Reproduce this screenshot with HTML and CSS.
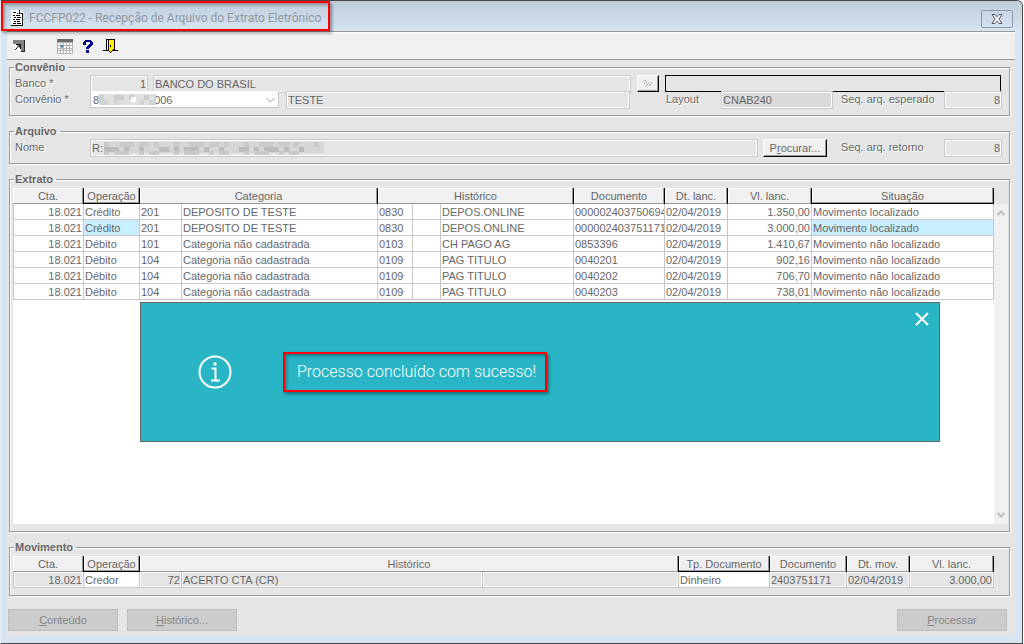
FILE: index.html
```
<!DOCTYPE html>
<html lang="pt-BR">
<head>
  <meta charset="UTF-8">
  <meta name="viewport" content="width=device-width, initial-scale=1.0">
  <title>FCCFP022 - Recepção de Arquivo do Extrato Eletrônico</title>
  <link rel="stylesheet" href="styles.css">
</head>
<body>
  <div class="window">
    <header class="titlebar">
      <div class="title highlight">
        <svg width="12" height="16" viewBox="0 0 12 16" shape-rendering="crispEdges">
          <path d="M0 0h9l3 3v13H0z" fill="#fff"/>
          <path d="M11 3h1v13h-1zM0 15h12v1H0zM8 0h1v3h3v1H8z" fill="#111"/>
          <path d="M2 2h3v1H2zM6 3h1v1H6zM2 5h2v1H2zM5 5h4v1H5zM3 7h2v1H3zM6 7h4v1H6zM2 9h2v1H2zM5 9h4v1H5zM3 11h2v1H3zM6 11h3v1H6zM2 13h3v1H2zM6 13h4v1H6z" fill="#000"/>
        </svg>
        <h1>FCCFP022 - Recepção de Arquivo do Extrato Eletrônico</h1>
      </div>
      <button class="win-close" type="button" aria-label="Fechar">
        <svg width="12" height="10" viewBox="0 0 12 10">
          <path d="M1 .5h3l2 2.300L8 .5h3L8 5l3 4.500H8L6 7.200 4 9.500H1L4 5z" fill="#f4f6fa" stroke="#51566a"/>
        </svg>
      </button>
    </header>

    <div class="client">
      <nav class="toolbar">
        <button type="button" aria-label="Abrir">
          <svg width="12" height="12" viewBox="0 0 12 12" shape-rendering="crispEdges">
            <path d="M0 0h12v12H0z" fill="#808080"/>
            <path d="M11 0h1v12h-1zM8 11h4v1H8z" fill="#222"/>
            <path d="M0 4h2l6 6v2H0z" fill="#fff"/>
            <path d="M3 4h5v5H7V6H6v1H5v1H4v1H3v1H2V9h1V8h1V7h1V6h1V5H3z" fill="#111"/>
          </svg>
        </button>
        <button type="button" class="calendar" aria-label="Calendário">
          <svg width="16" height="15" viewBox="0 0 16 15" shape-rendering="crispEdges">
            <path d="M0 0h16v15H0z" fill="#b4b4b4"/>
            <path d="M0 0h16v3H0z" fill="#6a6a6a"/>
            <path d="M1 4h2v2H1zM4 4h2v2H4zM7 4h2v2H7zM10 4h2v2h-2zM13 4h2v2h-2zM1 7h2v2H1zM7 7h2v2H7zM10 7h2v2h-2zM13 7h2v2h-2zM1 10h2v1H1zM4 10h2v1H4zM7 10h2v1H7zM10 10h2v1h-2zM13 10h2v1h-2zM1 12h2v2H1zM4 12h2v2H4zM7 12h2v2H7zM10 12h2v2h-2zM13 12h2v2h-2z" fill="#fff"/>
            <path d="M4 6h2v2H4z" fill="#1979b5"/>
          </svg>
        </button>
        <button type="button" aria-label="Ajuda">
          <svg width="10" height="13" viewBox="0 0 10 13" shape-rendering="crispEdges">
            <path d="M2 0h6v1h1v1h1v3H9v1H8v1H7v1H6v1H3V7h1V6h1V5h1V4h1V2H3v3H0V2h1V1h1zM3 10h3v3H3z" fill="#00008b"/>
          </svg>
        </button>
        <button type="button" aria-label="Sair">
          <svg width="15" height="14" viewBox="0 0 15 14" shape-rendering="crispEdges">
            <path d="M3 0h9v11h3v1H0v-1h3z" fill="#000"/>
            <path d="M4 1h7v10H4z" fill="#fff"/>
            <path d="M5 1h6v10h-1v1H9v1H8v1H7v-1H6v-1H5z" fill="#000"/>
            <path d="M6 1h5v9h-1v1H9v1H8v1H7v-1H6z" fill="#ffee00"/>
            <path d="M4 2h1v9H4z" fill="#fff"/>
            <path d="M7 6h1v2H7z" fill="#000"/>
          </svg>
        </button>
      </nav>

      <main class="content">
        <fieldset class="group">
          <legend>Convênio</legend>
          <div class="row">
            <label class="caption" for="banco">Banco *</label>
            <input class="field num code" id="banco" value="1" readonly>
            <input class="field grow bank-name" value="BANCO DO BRASIL" aria-label="Nome do banco" readonly>
            <button class="btn btn-lookup" type="button" aria-label="Consultar">
              <svg width="10" height="8" viewBox="0 0 10 8" shape-rendering="crispEdges">
                <path d="M0 1h1v1H0zM2 0h1v1H2zM3 2h1v1H3zM1 3h1v1H1zM4 4h1v1H4zM5 3h1v1H5zM3 5h1v1H3zM8 2h1v1H8zM7 4h1v1H7zM6 5h1v1H6z" fill="#999"/>
              </svg>
            </button>
            <output class="status"></output>
          </div>
          <div class="row">
            <label class="caption" for="convenio">Convênio *</label>
            <div class="select-wrap">
              <select id="convenio">
                <option>8&nbsp;&nbsp;&nbsp;&nbsp;&nbsp;&nbsp;&nbsp;&nbsp;&nbsp;&nbsp;&nbsp;&nbsp;&nbsp;&nbsp;&nbsp;&nbsp;&nbsp;&nbsp;006</option>
              </select>
              <svg class="mask mask-agreement" width="57" height="11" viewBox="0 0 57 11" shape-rendering="crispEdges">
                <path d="M0 0h57v11H0z" fill="#e0e0e0"/>
                <path d="M0 3h57" stroke="#cdcdcd" stroke-width="5" stroke-dasharray="5 10 10 5 5 10 5 5"/>
                <path d="M0 8h57" stroke="#d4d4d4" stroke-width="5" stroke-dasharray="10 5 5 20 5 5 10 5"/>
                <path d="M32 3h5v5h-5z" fill="#fff"/>
              </svg>
              <svg class="chevron" width="9" height="6" viewBox="0 0 9 6"><path d="M.5 1l4 4 4-4" fill="none" stroke="#a0a0a0"/></svg>
            </div>
            <input class="field grow agreement-name" value="TESTE" aria-label="Nome do convênio" readonly>
            <label class="caption-layout" for="layout">Layout</label>
            <input class="field layout" id="layout" value="CNAB240" readonly>
            <label class="caption-seq" for="seqEsperado">Seq. arq. esperado</label>
            <input class="field num code" id="seqEsperado" value="8" readonly>
          </div>
        </fieldset>

        <fieldset class="group">
          <legend>Arquivo</legend>
          <div class="row">
            <label class="caption" for="nome">Nome</label>
            <div class="file-wrap">
              <input class="field" id="nome" value="R:" readonly>
              <svg class="mask mask-file" width="220" height="15" viewBox="0 0 220 15" shape-rendering="crispEdges">
                <path d="M0 2h220v11H0z" fill="#d6d6d6"/>
                <path d="M0 4h220" stroke="#cacaca" stroke-width="5" stroke-dasharray="5 10 15 5 10 5 5 15"/>
                <path d="M0 9h215" stroke="#bcbcbc" stroke-width="5" stroke-dasharray="15 5 5 10 5 15 10 5 5 5"/>
                <path d="M0 13h210" stroke="#cacaca" stroke-width="4" stroke-dasharray="5 5 15 10 5 5 10 15"/>
              </svg>
            </div>
            <button class="btn btn-browse" type="button">P<u>r</u>ocurar...</button>
            <label class="caption-seq" for="seqRetorno">Seq. arq. retorno</label>
            <input class="field num code" id="seqRetorno" value="8" readonly>
          </div>
        </fieldset>

        <fieldset class="group statement">
          <legend>Extrato</legend>
          <div class="grid-area">
            <table class="grid">
              <colgroup>
                <col class="w-71"><col class="w-56"><col class="w-42"><col>
                <col class="w-35"><col class="w-28"><col class="w-133"><col class="w-91">
                <col class="w-63"><col class="w-84"><col class="w-182">
              </colgroup>
              <thead>
                <tr>
                  <th>Cta.</th>
                  <th class="key">Operação</th>
                  <th colspan="2">Categoria</th>
                  <th colspan="3">Histórico</th>
                  <th>Documento</th>
                  <th>Dt. lanc.</th>
                  <th>Vl. lanc.</th>
                  <th class="key">Situação</th>
                </tr>
              </thead>
              <tbody>
                <tr>
                  <td class="num">18.021</td><td>Crédito</td><td>201</td><td>DEPOSITO DE TESTE</td>
                  <td>0830</td><td></td><td>DEPOS.ONLINE</td><td>000002403750694</td>
                  <td>02/04/2019</td><td class="num">1.350,00</td><td>Movimento localizado</td>
                </tr>
                <tr>
                  <td class="num">18.021</td><td class="current">Crédito</td><td>201</td><td>DEPOSITO DE TESTE</td>
                  <td>0830</td><td></td><td>DEPOS.ONLINE</td><td>000002403751171</td>
                  <td>02/04/2019</td><td class="num">3.000,00</td><td class="current">Movimento localizado</td>
                </tr>
                <tr>
                  <td class="num">18.021</td><td>Débito</td><td>101</td><td>Categoria não cadastrada</td>
                  <td>0103</td><td></td><td>CH PAGO AG</td><td>0853396</td>
                  <td>02/04/2019</td><td class="num">1.410,67</td><td>Movimento não localizado</td>
                </tr>
                <tr>
                  <td class="num">18.021</td><td>Débito</td><td>104</td><td>Categoria não cadastrada</td>
                  <td>0109</td><td></td><td>PAG TITULO</td><td>0040201</td>
                  <td>02/04/2019</td><td class="num">902,16</td><td>Movimento não localizado</td>
                </tr>
                <tr>
                  <td class="num">18.021</td><td>Débito</td><td>104</td><td>Categoria não cadastrada</td>
                  <td>0109</td><td></td><td>PAG TITULO</td><td>0040202</td>
                  <td>02/04/2019</td><td class="num">706,70</td><td>Movimento não localizado</td>
                </tr>
                <tr>
                  <td class="num">18.021</td><td>Débito</td><td>104</td><td>Categoria não cadastrada</td>
                  <td>0109</td><td></td><td>PAG TITULO</td><td>0040203</td>
                  <td>02/04/2019</td><td class="num">738,01</td><td>Movimento não localizado</td>
                </tr>
              </tbody>
            </table>
            <div class="scrollbar">
              <svg width="8" height="6" viewBox="0 0 8 6"><path d="M.5 5L4 1.500 7.500 5" fill="none" stroke="#bdbdbd" stroke-width="2"/></svg>
              <svg width="8" height="6" viewBox="0 0 8 6"><path d="M.5 1L4 4.500 7.500 1" fill="none" stroke="#bdbdbd" stroke-width="2"/></svg>
            </div>
          </div>
        </fieldset>

        <fieldset class="group movement">
          <legend>Movimento</legend>
          <div class="movement-grid">
            <table class="grid grid-readonly">
              <colgroup>
                <col class="w-71"><col class="w-56"><col class="w-42"><col>
                <col class="w-196"><col class="w-91"><col class="w-77">
                <col class="w-63"><col class="w-84">
              </colgroup>
              <thead>
                <tr>
                  <th>Cta.</th>
                  <th class="key">Operação</th>
                  <th colspan="3">Histórico</th>
                  <th class="key">Tp. Documento</th>
                  <th>Documento</th>
                  <th>Dt. mov.</th>
                  <th>Vl. lanc.</th>
                </tr>
              </thead>
              <tbody>
                <tr>
                  <td class="num">18.021</td><td class="editable">Credor</td><td class="num">72</td><td>ACERTO CTA (CR)</td>
                  <td></td><td class="editable">Dinheiro</td><td>2403751171</td>
                  <td>02/04/2019</td><td class="num">3.000,00</td>
                </tr>
              </tbody>
            </table>
          </div>
        </fieldset>

        <footer class="actions">
          <button type="button" disabled><u>C</u>onteúdo</button>
          <button type="button" disabled><u>H</u>istórico...</button>
          <button type="button" class="process" disabled><u>P</u>rocessar</button>
        </footer>
      </main>
    </div>

    <div class="dialog" role="alertdialog" aria-labelledby="dialogText">
      <svg class="info" width="34" height="34" viewBox="0 0 34 34">
        <circle cx="17" cy="17" r="15.500" fill="none" stroke="#fff" stroke-width="2"/>
        <path d="M13.500 13.500H17.500V25M13 25.500h9" fill="none" stroke="#fff" stroke-width="2"/>
        <circle cx="17" cy="9" r="1.700" fill="#fff"/>
      </svg>
      <p class="message highlight" id="dialogText">Processo concluído com sucesso!</p>
      <button class="dialog-close" type="button" aria-label="Fechar mensagem">
        <svg width="14" height="14" viewBox="0 0 14 14"><path d="M1 1l12 12M13 1L1 13" stroke="#fff" stroke-width="2"/></svg>
      </button>
    </div>
  </div>
</body>
</html>
```
FILE: styles.css
```
* {
  box-sizing: border-box;
}
body {
  margin: 0;
  background: #fff;
  font: 11px/14px "Liberation Sans", Arial, sans-serif;
  color: #666;
}
button, input, select {
  font: inherit;
  color: inherit;
  margin: 0;
  padding: 0;
}
button {
  border: none;
  background: none;
}
svg {
  display: block;
}

/* window frame */
.window {
  position: relative;
  display: flex;
  flex-direction: column;
  min-height: 100vh;
  margin-right: 1px;
  background: #d7e4f2;
  border: 1px solid #4a4a4a;
  border-left-color: #e8eff7;
  border-top-right-radius: 6px;
}
.titlebar {
  display: flex;
  justify-content: space-between;
  align-items: flex-start;
  height: 30px;
  background: linear-gradient(#bfcddb, #d7e4f2);
  border-top-right-radius: 6px;
}
.highlight {
  border: 2px solid #f00;
  box-shadow: 2px 2px 3px rgba(0,0,0,0.4), inset 2px 2px 3px rgba(0,0,0,0.3);
}
.title {
  display: flex;
  align-items: center;
  gap: 6px;
  height: 30px;
  padding: 4px 7px 0 8px;
  z-index: 1;
}
h1 {
  margin: 0;
  font: 12px/16px Roboto, "Noto Sans", sans-serif;
  color: #8f989f;
  white-space: nowrap;
}
.win-close {
  display: flex;
  align-items: center;
  justify-content: center;
  width: 32px;
  height: 18px;
  margin: 9px 9px 0 0;
  border: 1px solid #8e9aa8;
  border-radius: 2px;
}
.client {
  flex: 1;
  display: flex;
  flex-direction: column;
  margin: 0 7px 7px 6px;
  background: #e5e5e5;
  border-top: 1px solid #999;
}
.toolbar {
  display: flex;
  align-items: center;
  gap: 10px;
  height: 28px;
  padding: 0 6px;
  background: #f0f0f0;
  border-top: 1px solid #fff;
  border-bottom: 1px solid #999;
}
.toolbar .calendar {
  margin-left: 22px;
}

/* groups */
.content {
  flex: 1;
  display: flex;
  flex-direction: column;
  gap: 8px;
  padding: 0 5px 5px 2px;
}
.group {
  min-width: 0;
  margin: 0;
  padding: 1px 7px 8px 5px;
  border: 1px solid #999;
  box-shadow: 1px 1px #fff, inset 1px 1px #fff;
}
legend {
  padding: 0 3px 0 1px;
  margin-left: -1px;
  font-weight: bold;
  line-height: 14px;
}
.row {
  display: flex;
  height: 16px;
}
.row label {
  line-height: 16px;
  text-shadow: 1px 1px #fff;
}
.caption {
  width: 75px;
}
.field {
  height: 18px;
  padding: 0 1px;
  background: #e5e5e5;
  border: 1px solid #c8c8c8;
  outline: 1px solid #fff;
  outline-offset: -2px;
  border-radius: 0;
}
.num {
  text-align: right;
}
.grow {
  flex: 1;
  min-width: 0;
}
.code {
  width: 58px;
}
.bank-name {
  margin: 0 6px 0 5px;
}
.btn {
  background: #f0f0f0;
  border: 1px solid #000;
  border-top-color: #fff;
  border-left-color: #fff;
  box-shadow: inset -1px -1px #999;
}
.btn-lookup {
  display: flex;
  align-items: center;
  justify-content: center;
  width: 22px;
  height: 17px;
}
.status {
  width: 336px;
  height: 17px;
  margin: 0 1px 0 6px;
  border: 1px solid #000;
}
.select-wrap {
  position: relative;
  width: 189px;
}
.select-wrap select {
  appearance: none;
  width: 100%;
  height: 17px;
  padding: 0 2px;
  background: #fff;
  border: 1px solid #c8c8c8;
  border-top-color: #fff;
  border-radius: 0;
}
.chevron {
  position: absolute;
  right: 4px;
  top: 6px;
}
.mask {
  position: absolute;
}
.mask-agreement {
  left: 9px;
  top: 3px;
}
.agreement-name {
  margin: 0 36px 0 7px;
}
.caption-layout {
  width: 55px;
}
.layout {
  width: 112px;
  margin-right: 8px;
  background: #d9d9d9;
}
.caption-seq {
  width: 103px;
}
.file-wrap {
  position: relative;
  flex: 1;
}
.file-wrap .field {
  width: 100%;
}
.mask-file {
  left: 14px;
  top: 1px;
}
.btn-browse {
  width: 64px;
  height: 18px;
  margin: 0 14px 0 5px;
}

/* data grids */
.statement {
  flex: 1;
  display: flex;
  flex-direction: column;
  padding: 1px 1px 7px 3px;
}
.statement legend {
  margin-left: 1px;
}
.grid-area {
  flex: 1;
  display: flex;
  min-height: 336px;
  margin-top: 1px;
  background: linear-gradient(#e5e5e5 16px, #fff 16px);
}
.grid {
  flex: 1;
  align-self: flex-start;
  width: 100%;
  table-layout: fixed;
  border-spacing: 0;
}
.grid th {
  height: 16px;
  padding: 0;
  line-height: 14px;
  font-weight: normal;
  background: #f0f0f0;
  border-right: 1px solid #000;
  box-shadow: inset -1px -1px #999, inset 1px 1px #fff;
}
.grid th.key {
  border-bottom: 1px solid #000;
}
.grid td {
  height: 16px;
  padding: 1px 1px 0;
  line-height: 14px;
  background: #fff;
  border-right: 1px solid #c8c8c8;
  border-bottom: 1px solid #c8c8c8;
  white-space: nowrap;
  overflow: hidden;
}
.grid td:first-child {
  border-left: 1px solid #c8c8c8;
}
.grid td.current {
  background: #c8efff;
}
.grid-readonly td {
  background: #e5e5e5;
  box-shadow: inset 0 0 0 1px #f8f8f8;
}
.grid-readonly td.editable {
  background: #fff;
}
.w-28 { width: 28px; }
.w-35 { width: 35px; }
.w-42 { width: 42px; }
.w-56 { width: 56px; }
.w-63 { width: 63px; }
.w-71 { width: 71px; }
.w-77 { width: 77px; }
.w-84 { width: 84px; }
.w-91 { width: 91px; }
.w-133 { width: 133px; }
.w-182 { width: 182px; }
.w-196 { width: 196px; }
.scrollbar {
  display: flex;
  flex-direction: column;
  justify-content: space-between;
  align-items: center;
  width: 14px;
  margin-top: 16px;
  padding: 6px 0;
  background: #f0f0f0;
}
.movement {
  padding-bottom: 7px;
}
.movement-grid {
  margin: 1px 8px 0 -2px;
}

/* bottom buttons */
.actions {
  display: flex;
  gap: 9px;
  padding: 5px 3px 0 0;
  margin-left: -1px;
}
.actions button {
  width: 110px;
  height: 22px;
  background: #ccc;
  border: 1px solid #bdbdbd;
  color: #858585;
}
.actions .process {
  margin-left: auto;
}

/* message */
.dialog {
  position: absolute;
  left: 139px;
  top: 301px;
  display: flex;
  align-items: center;
  width: 800px;
  height: 140px;
  padding-left: 57px;
  background: #29b5c6;
  border: 1px solid #666;
  color: #fff;
}
.message {
  margin: 0 0 0 51px;
  padding: 8px 9px 8px 12px;
  font: 300 16px/20px Roboto, "Liberation Sans", sans-serif;
}
.dialog-close {
  position: absolute;
  right: 10px;
  top: 9px;
}
```
